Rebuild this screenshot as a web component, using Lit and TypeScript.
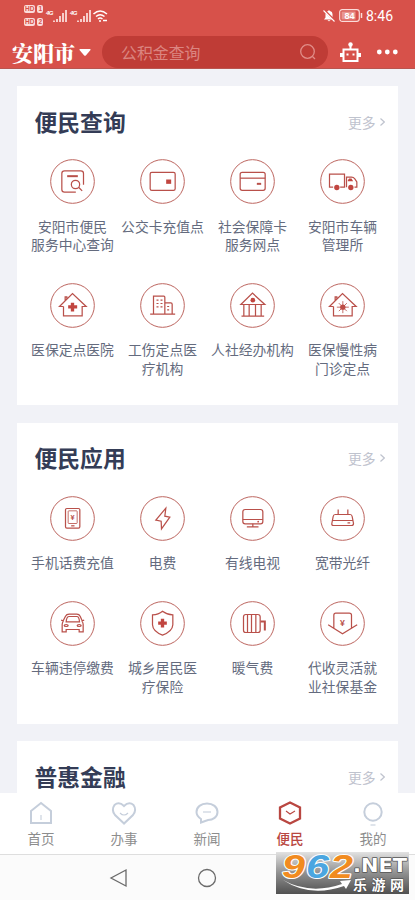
import { LitElement, html, svg, css } from "lit";
import { customElement, property } from "lit/decorators.js";
import { classMap } from "lit/directives/class-map.js";

// Service glyphs, drawn around the centre of a 135-unit circle.
const house = svg`<path d="M-27 3H-39L0-36L41 3H29V31H-27V3M-22-15V-26H-17V-20"/>`;
const icons: Record<string, unknown> = {
  search: svg`<path d="M33 10V-24Q33-32 25-32H-24Q-32-32-32-24V24Q-32 32-24 32H10M19 18L29 28"/><circle cx="9" cy="9" r="12.5"/><path class="bold" d="M-16-16H16"/>`,
  wallet: svg`<rect x="-37" y="-27.5" width="75" height="54" rx="5"/><rect class="fill" x="11" y="-6" width="15" height="13"/>`,
  card: svg`<rect x="-37" y="-27.5" width="75" height="54" rx="6"/><path d="M-37-10H38"/><path class="bold" d="M13 7H26"/>`,
  truck: svg`<path d="M-28 17H-39V-22H6V17H-7M12 17V-13H27Q33-13 37-8L43 1V17H36"/><circle class="fill" cx="-17" cy="18" r="8"/><circle class="fill" cx="25" cy="18" r="8"/><path class="fill" d="M16-4L20-9H27L32-1H16Z"/>`,
  hospital: svg`${house}<path class="fill" d="M-5-8H5V-1H14V9H5V18H-5V9H-13V-1H-5Z"/>`,
  building: svg`<path d="M-37 26H38M-27 26V-28H4Q7-28 7-25V26M7-8H25Q29-8 29-4V26"/><path class="dash" d="M-18-16H1M-18-6H1M-18 4H1M14 3H24M14 13H24"/>`,
  bank: svg`<path d="M-35-3L0-37L37-3ZM-26-3V31M-10-3V31M9-3V31M26-3V31M-33 32H35"/><circle class="fill" cx="1" cy="-16" r="7"/>`,
  virus: svg`${house}<circle class="fill" cx="1" cy="5" r="8"/><path class="thin" d="M1-13V23M-17 5H19M-11-7L13 17M13-7L-11 17"/>`,
  phone: svg`<rect x="-21" y="-30" width="43" height="59" rx="4"/><rect class="thin" x="-13" y="-23" width="27" height="38" rx="2"/><path d="M-4 22H6"/><text x="0" y="5">¥</text>`,
  bolt: svg`<path d="M10-31L-20 5L-4 8L-3 31L22-4L7-7Z"/>`,
  tv: svg`<rect x="-29" y="-27" width="60" height="43" rx="7"/><path d="M-29 3H31M1 16V24M-17 25H18"/><circle class="fill" cx="17" cy="9.500" r="2.500"/>`,
  router: svg`<path d="M-22-12H23Q28-12 29-6L33 15Q33 21 27 21H-27Q-33 21-32 15L-28-6Q-27-12-22-12ZM-31 6H31M-13-27V-12M16-27V-12M15 13H23"/>`,
  car: svg`<path d="M-28-8L-21-22Q-18-28-10-28H13Q20-28 23-22L29-8L35-10M-28-8L-34-10M-27-7Q-31-3-31 3V25H-19V18H20V25H32V3Q32-3 28-7M-19-5Q-18-21-10-21H13Q20-21 21-5Z"/><ellipse cx="-19" cy="6" rx="6" ry="3"/><ellipse cx="20" cy="6" rx="6" ry="3"/>`,
  shield: svg`<path d="M0-37Q13-27 31-26V4Q30 24 0 35Q-29 24-30 4V-26Q-12-27 0-37Z"/><path class="fill" d="M-5-14H5V-6H13V4H5V12H-5V4H-13V-6H-5Z"/>`,
  heater: svg`<rect x="-27" y="-27" width="50" height="54" rx="7"/><path d="M-15-27V27M-3-27V27M10-27V27"/><path class="bold" d="M24-6H37V21"/>`,
  fund: svg`<path d="M-26 14V-25Q-26-31-20-31H20Q27-31 27-25V14M-43 4L0 31L44 4"/><text class="big" x="0" y="8">¥</text>`,
};

interface Service { icon: string; label: string }

@customElement("service-card")
class ServiceCard extends LitElement {
  @property() heading = "";
  @property({ attribute: false }) items: Service[] = [];
  static styles = css`
    :host { display: block; background: #fff; padding: 0 9.500px 0 10.500px; }
    .head { display: flex; justify-content: space-between; align-items: center; height: 73px; padding: 0 4px 2px 7px; box-sizing: border-box; }
    h2 { margin: 0; font-size: 22.8px; font-weight: 700; line-height: 30px; color: #343c56; }
    .more { display: flex; align-items: center; gap: 4px; font-size: 13.8px; color: #bfc3ce; }
    .more svg { width: 5px; height: 8px; fill: none; stroke: #bfc3ce; stroke-width: 1.2; }
    .grid { display: grid; grid-template-columns: repeat(4, 90px); row-gap: 29.200px; }
    .item { display: flex; flex-direction: column; align-items: center; gap: 12.500px; }
    .label { font-size: 13.8px; line-height: 18.500px; white-space: pre; text-align: center; color: #646b7e; }
    .icon { width: 45px; height: 45px; fill: none; stroke: #b9504a; stroke-width: 3.700; }
    .ring { stroke: #bd6660; stroke-width: 3; }
    .fill { fill: #c14640; stroke: none; }
    .bold { stroke-width: 6; }
    .thin { stroke-width: 2.500; }
    .dash { stroke-dasharray: 6 6; }
    text { fill: #b9504a; stroke: none; font: 700 22px "Liberation Sans", sans-serif; text-anchor: middle; }
    .big { font-size: 26px; }
  `;
  render() {
    return html`
      <div class="head"><h2>${this.heading}</h2>
        <span class="more">更多<svg viewBox="0 0 5 8"><path d="M.5.5L4.300 4L.5 7.500"/></svg></span></div>
      <div class="grid">${this.items.map((i) => html`
        <div class="item">
          <svg class="icon" viewBox="-67.5 -67.5 135 135"><circle class="ring" r="65.5"/>${icons[i.icon]}</svg>
          <div class="label">${i.label}</div>
        </div>`)}</div>`;
  }
}

const queries: Service[] = [
  { icon: "search", label: "安阳市便民\n服务中心查询" },
  { icon: "wallet", label: "公交卡充值点" },
  { icon: "card", label: "社会保障卡\n服务网点" },
  { icon: "truck", label: "安阳市车辆\n管理所" },
  { icon: "hospital", label: "医保定点医院" },
  { icon: "building", label: "工伤定点医\n疗机构" },
  { icon: "bank", label: "人社经办机构" },
  { icon: "virus", label: "医保慢性病\n门诊定点" },
];
const apps: Service[] = [
  { icon: "phone", label: "手机话费充值" },
  { icon: "bolt", label: "电费" },
  { icon: "tv", label: "有线电视" },
  { icon: "router", label: "宽带光纤" },
  { icon: "car", label: "车辆违停缴费" },
  { icon: "shield", label: "城乡居民医\n疗保险" },
  { icon: "heater", label: "暖气费" },
  { icon: "fund", label: "代收灵活就\n业社保基金" },
];
const tabs = [
  { label: "首页", art: svg`<path d="M-10-2L0-10L10-2V10H-10Z"/><path class="fine" d="M0 2V7"/>` },
  { label: "办事", art: svg`<path d="M0 10.500L-9 2Q-13-3-9.500-8Q-5-12 0-7Q5-12 9.500-8Q13-3 9 2Z"/><path class="fine" d="M-4 0Q0 4 4 0"/>` },
  { label: "新闻", art: svg`<path d="M-6 9.500V6Q-10.500 3-10.500-1C-10.500-6-6-9.500 0-9.500S10.500-6 10.500-1S6 7 1 7Z"/><path class="fine" d="M-4-1H4"/>` },
  { label: "便民", art: svg`<path d="M0-10.500L10-5.500V5.500L0 10.500L-10 5.500V-5.500Z"/><path class="fine" d="M-4-2L0 1L5-2"/>` },
  { label: "我的", art: svg`<circle cy="-1" r="8.700"/><path class="fine" d="M-2.500 12H2.500"/>` },
];

const signal = svg`<path d="M1 12V10.500M4 12V9M7 12V6M10 12V3M13 12V0"/>`;

@customElement("app-root")
class AppRoot extends LitElement {
  static styles = css`
    :host { display: flex; flex-direction: column; width: 415px; height: 900px; overflow: hidden; position: relative; background: #f1f2f7; font-family: "Noto Sans CJK SC", sans-serif; }
    svg { display: block; fill: none; overflow: visible; flex: none; }
    header { flex: none; height: 69px; box-sizing: border-box; background: #d7514a; border-bottom: 1px solid #b9554f; color: #fff; }
    .status { display: flex; align-items: center; height: 36px; padding: 0 24px 5px; box-sizing: border-box; }
    .hds { display: grid; gap: 5px; width: 19px; margin-right: 3px; }
    .hd { display: flex; gap: 2px; font: 700 6.500px/8px "Liberation Sans", sans-serif; color: #d7514a; }
    .hd span { background: #fbdcda; border-radius: 2px; padding: 0 1px; }
    .net { display: flex; align-items: flex-start; width: 21px; margin-right: 3px; }
    .net b { width: 7px; font: italic 700 6px/7px "Liberation Sans", sans-serif; letter-spacing: -.5px; }
    .net svg { width: 14px; height: 12px; stroke: #fbdcda; stroke-width: 1.800; }
    .wifi { width: 15px; height: 12px; margin-left: -1px; stroke: #fff; stroke-width: 1.500; }
    .grow { flex: 1; }
    .bell { width: 12px; height: 12px; }
    .battery { width: 24px; height: 13px; margin: 0 3px 0 4px; }
    .battery text { fill: #fff; font: 700 9px "Liberation Sans", sans-serif; text-anchor: middle; }
    .time { font: 14px/16px Roboto, sans-serif; width: 25px; padding-top: 1px; }
    .bar { display: flex; align-items: center; height: 32px; padding-left: 12px; }
    .city { font: 900 21px/32px "Noto Serif CJK SC", "Noto Serif SC", "Noto Sans CJK SC", serif; width: 63px; white-space: nowrap; }
    .caret { width: 12px; height: 7px; margin: 0 15px 0 4px; }
    .find { display: flex; align-items: center; justify-content: space-between; width: 226px; height: 32px; border-radius: 16px; background: #bf3c36; box-sizing: border-box; padding: 0 12px 0 19px; margin-left: -4px; color: #db8580; font-size: 15.900px; }
    .find svg { width: 16px; height: 16px; stroke: #e18d88; stroke-width: 1.300; }
    .robot { width: 21px; height: 21px; margin: 0 15px 0 12px; }
    .dots { width: 23px; height: 6px; }
    main { flex: 1; min-height: 0; overflow: hidden; display: flex; flex-direction: column; gap: 17.500px; padding: 17px 17px 0; }
    service-card { flex: none; width: 361px; }
    .one { height: 319px; }
    .two { height: 301px; }
    .three { height: 80px; }
    .tabs { flex: none; display: grid; grid-template-columns: repeat(5, 83px); height: 61px; background: #fff; border-bottom: 1px solid #dedede; }
    .tab { display: flex; flex-direction: column; align-items: center; padding: 7px 1px 0 0; font-size: 13.500px; line-height: 20px; gap: 4px; color: #8d8d8d; }
    .tab svg { width: 26px; height: 26px; stroke: #c5cedb; stroke-width: 2; margin-bottom: -2px; }
    .tab .fine { stroke-width: 1.100; }
    .tab.on { color: #b94741; font-weight: 500; }
    .tab.on svg { stroke: #b94741; stroke-width: 2.300; }
    .nav { flex: none; height: 45px; background: #fbfbfb; display: flex; align-items: center; padding-left: 110px; gap: 70px; }
    .nav svg { width: 18px; height: 18px; stroke: #6b6b6b; stroke-width: 1.300; }
    .badge { position: absolute; left: 276px; top: 852px; width: 133px; height: 42px; background: linear-gradient(#e2e2e2, #909090 50%, #505050); }
    .badge svg { width: 133px; height: 42px; }
    .badge text { stroke-linejoin: round; paint-order: stroke; }
    .num { font: italic 700 34px "Liberation Sans", sans-serif; stroke: #fff; stroke-width: 2; }
    .dot { font: 700 19px "DejaVu Sans", sans-serif; fill: #fff; stroke: #555; stroke-width: 1.500; }
    .cn { font: 700 14px "Noto Sans CJK SC", sans-serif; fill: #fff; stroke: #444; stroke-width: 1; }
  `;
  render() {
    return html`
      <header>
        <div class="status">
          <div class="hds"><div class="hd"><span>HD</span><span>1</span></div><div class="hd"><span>HD</span><span>2</span></div></div>
          <div class="net"><b>4G</b><svg viewBox="0 0 14 12">${signal}</svg></div>
          <div class="net"><b>4G</b><svg viewBox="0 0 14 12">${signal}</svg></div>
          <svg class="wifi" viewBox="0 0 15 12"><path d="M.5 4Q7-2 14 4M3 6.500Q7 3 11.500 6.500M5 9Q7 7 9.500 9"/><circle cx="7" cy="11" r="1" fill="#fff" stroke="none"/><path d="M10 10.500H14"/></svg>
          <span class="grow"></span>
          <svg class="bell" viewBox="0 0 12 12"><path fill="#fff" d="M1 9.500L2.500 7.500V4Q3 1.500 5 1Q6-.5 7 1Q9.500 1.500 9.500 4V7.500L11 9.500ZM4.500 10.300H7.500Q6 12.300 4.500 10.300"/><path d="M1 0L12 11" stroke="#d7514a" stroke-width="2.400"/><path d="M.5.5L11.500 11.500" stroke="#fff" stroke-width="1.100"/></svg>
          <svg class="battery" viewBox="0 0 24 13"><rect x=".7" y=".7" width="19.600" height="11.600" rx="2.500" stroke="#fbdcda" stroke-width="1.200"/><rect x="2.500" y="2.500" width="14" height="8" fill="#e99792"/><path d="M22.500 4V9" stroke="#fbdcda" stroke-width="1.500"/><text x="10.500" y="9.800">84</text></svg>
          <span class="time">8:46</span>
        </div>
        <div class="bar">
          <span class="city">安阳市</span>
          <svg class="caret" viewBox="0 0 12 7"><path fill="#fff" d="M1 0H11Q12 .3 11.500 1L6.800 6.500Q6 7.200 5.200 6.500L.5 1Q0 .3 1 0"/></svg>
          <div class="find"><span>公积金查询</span><svg viewBox="0 0 16 16"><circle cx="7.500" cy="7.500" r="6.800"/><path d="M12.500 12.500L15 15"/></svg></div>
          <svg class="robot" viewBox="0 0 21 21"><path stroke="#fff" stroke-width="2" d="M3.500 7.500H17.500V19H3.500ZM10.500 7V3"/><circle cx="10.500" cy="2.500" r="2.200" fill="#fff"/><path fill="#fff" d="M0 11H3V15H0ZM18 11H21V15H18ZM6.500 11.500H8.500V13.500H6.500ZM12.500 11.500H14.500V13.500H12.500Z"/></svg>
          <svg class="dots" viewBox="0 0 23 6"><circle fill="#fff" cx="3.300" cy="3" r="2.400"/><circle fill="#fff" cx="11.300" cy="3" r="2.400"/><circle fill="#fff" cx="19.300" cy="3" r="2.400"/></svg>
        </div>
      </header>
      <main>
        <service-card class="one" heading="便民查询" .items=${queries}></service-card>
        <service-card class="two" heading="便民应用" .items=${apps}></service-card>
        <service-card class="three" heading="普惠金融"></service-card>
      </main>
      <div class="tabs">${tabs.map((t, i) => html`
        <div class=${classMap({ tab: true, on: i === 3 })}><svg viewBox="-13 -13 26 26">${t.art}</svg><span>${t.label}</span></div>`)}</div>
      <div class="nav">
        <svg viewBox="0 0 18 18"><path d="M16 1V17L1 9Z"/></svg>
        <svg viewBox="0 0 18 18"><circle cx="9" cy="9" r="8.500"/></svg>
      </div>
      <div class="badge"><svg viewBox="0 0 133 42">
        <text class="num" x="6" y="26" textLength="23" lengthAdjust="spacingAndGlyphs" fill="#f18b20">9</text>
        <text class="num" x="30" y="26" textLength="23" lengthAdjust="spacingAndGlyphs" fill="#4ba6e0">6</text>
        <text class="num" x="54" y="26" textLength="23" lengthAdjust="spacingAndGlyphs" fill="#f18b20">2</text>
        <text class="dot" x="77" y="20" textLength="54" lengthAdjust="spacingAndGlyphs">.NET</text>
        <text class="cn" x="77" y="38" textLength="51">乐游网</text>
        <path fill="#fff" d="M7 28Q34 43 66 32L64 29L75 28L70 37L68 34Q34 46 7 28"/>
      </svg></div>`;
  }
}
